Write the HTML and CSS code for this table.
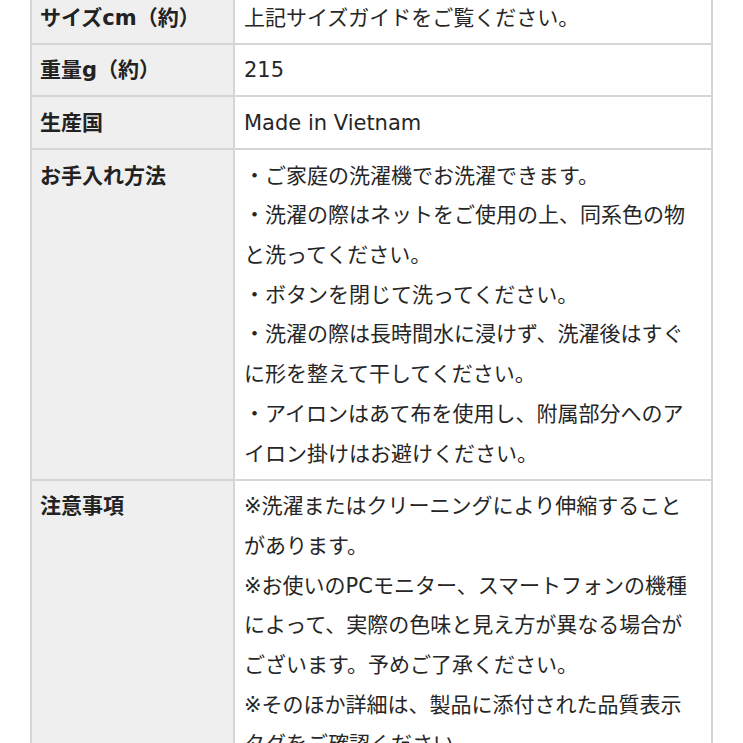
FILE: index.html
```html
<!DOCTYPE html>
<html lang="ja">
<head>
<meta charset="utf-8">
<title>商品詳細</title>
<link rel="stylesheet" href="styles.css">
</head>
<body>
<table class="spec">
  <tbody>
    <tr>
      <th>サイズcm（約）</th>
      <td>上記サイズガイドをご覧ください。</td>
    </tr>
    <tr>
      <th>重量g（約）</th>
      <td>215</td>
    </tr>
    <tr>
      <th>生産国</th>
      <td>Made in Vietnam</td>
    </tr>
    <tr>
      <th>お手入れ方法</th>
      <td>・ご家庭の洗濯機でお洗濯できます。<br>・洗濯の際はネットをご使用の上、同系色の物と洗ってください。<br>・ボタンを閉じて洗ってください。<br>・洗濯の際は長時間水に浸けず、洗濯後はすぐに形を整えて干してください。<br>・アイロンはあて布を使用し、附属部分へのアイロン掛けはお避けください。</td>
    </tr>
    <tr>
      <th>注意事項</th>
      <td>※洗濯またはクリーニングにより伸縮することがあります。<br>※お使いのPCモニター、スマートフォンの機種によって、実際の色味と見え方が異なる場合がございます。予めご了承ください。<br>※そのほか詳細は、製品に添付された品質表示タグをご確認ください。</td>
    </tr>
  </tbody>
</table>
</body>
</html>
```
FILE: styles.css
```css
html, body {
  margin: 0;
  padding: 0;
  background: #ffffff;
}

body {
  font-family: "DejaVu Sans", "Noto Sans CJK JP", sans-serif;
  font-size: 21px;
  color: #222222;
  overflow: hidden;
}

.spec {
  border-collapse: collapse;
  margin: -10px 0 0 30px;
  width: 683px;
  table-layout: fixed;
}

.spec th,
.spec td {
  border: 2px solid #d5d5d5;
  line-height: 39.7px;
  padding: 6.5px 10px 4.5px 9px;
  vertical-align: top;
  text-align: left;
}

.spec th {
  width: 185px;
  padding-left: 8px;
  padding-right: 8px;
  background: #efefef;
  font-weight: bold;
  color: #222222;
}

.spec td {
  background: #ffffff;
  font-weight: normal;
  color: #262626;
}
```
